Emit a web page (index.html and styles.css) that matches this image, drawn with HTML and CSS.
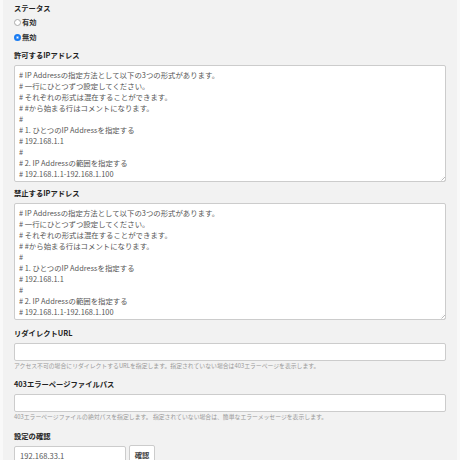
FILE: index.html
```html
<!DOCTYPE html>
<html lang="ja">
<head>
<meta charset="utf-8">
<title>IPアドレス制限</title>
<link rel="stylesheet" href="styles.css">
</head>
<body>
<div class="panel">
  <div class="field">
    <div class="label">ステータス</div>
    <div class="radios">
      <label class="radio-row"><input type="radio" name="status" class="radio"><span>有効</span></label>
      <label class="radio-row"><input type="radio" name="status" class="radio" checked><span>無効</span></label>
    </div>
  </div>

  <div class="field field-ta1">
    <div class="label">許可するIPアドレス</div>
    <div class="ta-wrap">
    <textarea class="ta"># IP Addressの指定方法として以下の3つの形式があります。
# 一行にひとつずつ設定してください。
# それぞれの形式は混在することができます。
# #から始まる行はコメントになります。
#
# 1. ひとつのIP Addressを指定する
# 192.168.1.1
#
# 2. IP Addressの範囲を指定する
# 192.168.1.1-192.168.1.100</textarea>
    </div>
  </div>

  <div class="field field-ta2">
    <div class="label">禁止するIPアドレス</div>
    <div class="ta-wrap">
    <textarea class="ta"># IP Addressの指定方法として以下の3つの形式があります。
# 一行にひとつずつ設定してください。
# それぞれの形式は混在することができます。
# #から始まる行はコメントになります。
#
# 1. ひとつのIP Addressを指定する
# 192.168.1.1
#
# 2. IP Addressの範囲を指定する
# 192.168.1.1-192.168.1.100</textarea>
    </div>
  </div>

  <div class="field field-url">
    <div class="label">リダイレクトURL</div>
    <input type="text" class="text-input">
    <div class="help">アクセス不可の場合にリダイレクトするURLを指定します。指定されていない場合は403エラーページを表示します。</div>
  </div>

  <div class="field field-403">
    <div class="label">403エラーページファイルパス</div>
    <input type="text" class="text-input">
    <div class="help">403エラーページファイルの絶対パスを指定します。 指定されていない場合は、簡単なエラーメッセージを表示します。</div>
  </div>

  <div class="field field-check">
    <div class="label">設定の確認</div>
    <div class="check-row">
      <input type="text" class="text-input check-input" value="192.168.33.1">
      <button type="button" class="btn">確認</button>
    </div>
  </div>
</div>
</body>
</html>
```

FILE: styles.css
```css
html, body {
  margin: 0;
  padding: 0;
  overflow: hidden;
}
body {
  background: #f9f9f9;
  font-family: "Noto Sans CJK JP", "Noto Sans", sans-serif;
  color: #222;
}
.panel {
  margin: 0 3px;
  padding: 2.5px 11px 20px;
  background: #f2f2f2;
  min-height: 460px;
  box-sizing: border-box;
  display: flex;
  flex-direction: column;
}
.label {
  font-size: 7.3px;
  font-weight: bold;
  line-height: 11px;
  height: 11px;
  color: #222;
}
.radios {
  margin-top: 1px;
  display: flex;
  flex-direction: column;
}
.radio-row {
  display: flex;
  align-items: center;
  height: 15px;
  font-size: 7.3px;
  font-weight: bold;
  color: #333;
}
.radio {
  -webkit-appearance: none;
  appearance: none;
  margin: 0 1px 0 0;
  width: 7px;
  height: 7px;
  border-radius: 50%;
  border: 1px solid #aaa;
  background: #fff;
  box-sizing: border-box;
}
.radio:checked {
  border: 2px solid #1a7cf2;
  background: #fff;
  box-shadow: inset 0 0 0 0.5px #1a7cf2;
}
.field-ta1 { margin-top: 5px; }
.field-ta2 { margin-top: 6px; }
.field-url { margin-top: 8px; }
.field-403 { margin-top: 8.5px; }
.field-check { margin-top: 9.5px; }
.ta-wrap {
  position: relative;
  margin-top: 4px;
}
.ta-wrap::after {
  content: "";
  position: absolute;
  right: 1px;
  bottom: 1px;
  width: 5px;
  height: 5px;
  background: repeating-linear-gradient(135deg, transparent 0 1px, #bbb 1px 1.6px);
  clip-path: polygon(100% 0, 100% 100%, 0 100%);
  pointer-events: none;
}
.ta {
  display: block;
  width: 100%;
  height: 117px;
  box-sizing: border-box;
  border: 1px solid #ccc;
  border-radius: 2px;
  background: #fff;
  padding: 3px 4px;
  font-family: "Noto Sans CJK JP", "Noto Sans", sans-serif;
  font-size: 7.4px;
  line-height: 11.1px;
  color: #555;
  overflow: hidden;
  resize: none;
}
.text-input {
  display: block;
  margin-top: 4px;
  width: 100%;
  height: 18px;
  box-sizing: border-box;
  border: 1px solid #ccc;
  border-radius: 2px;
  background: #fff;
  padding: 0 5px;
  font-family: "Noto Sans CJK JP", "Noto Sans", sans-serif;
  font-size: 7.6px;
  color: #555;
}
.help {
  margin-top: 1.5px;
  font-size: 5.85px;
  line-height: 8px;
  color: #999;
}
.check-row {
  display: flex;
  align-items: flex-start;
  gap: 3px;
  margin-top: 3px;
}
.check-input {
  margin-top: 1px;
  width: 112px;
  height: 19px;
}
.btn {
  width: 26px;
  height: 20px;
  padding: 0;
  border: 1px solid #ccc;
  border-radius: 2px;
  background: #fff;
  font-family: "Noto Sans CJK JP", "Noto Sans", sans-serif;
  font-size: 7.3px;
  font-weight: bold;
  color: #444;
}
```
